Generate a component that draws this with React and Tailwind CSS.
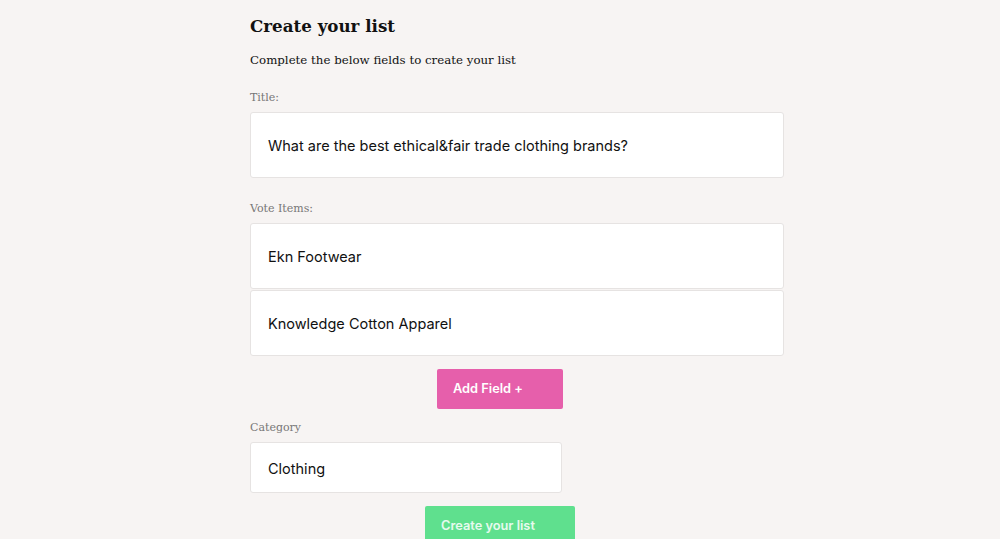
export default function App() {
  const serif = { fontFamily: '"DejaVu Serif", "Liberation Serif", serif' };
  return (
    <div className="min-h-[539px] w-full bg-[#f7f4f3] overflow-hidden">
      <div className="ml-[250px] w-[534px] pt-[12px]">
        <h1 className="text-[16.7px] leading-[28px] font-bold text-[#111]" style={serif}>Create your list</h1>
        <p className="mt-[10px] text-[11.8px] leading-[20px] text-[#111]" style={serif}>Complete the below fields to create your list</p>
        <div className="mt-[20px] text-[11px] leading-[16px] text-[#777]" style={serif}>Title:</div>
        <div className="mt-[6px] h-[66px] bg-white border border-[#e6e3e2] rounded-[3px] flex items-center pl-[17px] pt-[2px] text-[14.5px] text-[#111] font-['Inter',sans-serif]">
          What are the best ethical&amp;fair trade clothing brands?
        </div>
        <div className="mt-[23px] text-[11px] leading-[16px] text-[#777]" style={serif}>Vote Items:</div>
        <div className="mt-[6px] flex flex-col gap-[1px]">
          <div className="h-[66px] bg-white border border-[#e6e3e2] rounded-[3px] flex items-center pl-[17px] pt-[2px] text-[14.5px] text-[#111] font-['Inter',sans-serif]">Ekn Footwear</div>
          <div className="h-[66px] bg-white border border-[#e6e3e2] rounded-[3px] flex items-center pl-[17px] pt-[2px] text-[14.5px] text-[#111] font-['Inter',sans-serif]">Knowledge Cotton Apparel</div>
        </div>
        <div className="mt-[13px] flex pl-[187px]">
          <button className="h-[40px] w-[126px] bg-[#e65fab] rounded-[2px] text-left pl-[16px] text-[12.8px] font-semibold text-white font-['Inter',sans-serif]">Add Field +</button>
        </div>
        <div className="mt-[11px] text-[11px] leading-[16px] text-[#777]" style={serif}>Category</div>
        <div className="mt-[6px] h-[51px] w-[312px] bg-white border border-[#e6e3e2] rounded-[3px] flex items-center pl-[17px] pt-[2px] text-[14.5px] text-[#111] font-['Inter',sans-serif]">Clothing</div>
        <div className="mt-[13px] flex pl-[175px]">
          <button className="h-[40px] w-[150px] bg-[#5fe08e] rounded-[2px] text-left pl-[16px] text-[12.8px] font-semibold text-white/85 font-['Inter',sans-serif]">Create your list</button>
        </div>
      </div>
    </div>
  );
}
